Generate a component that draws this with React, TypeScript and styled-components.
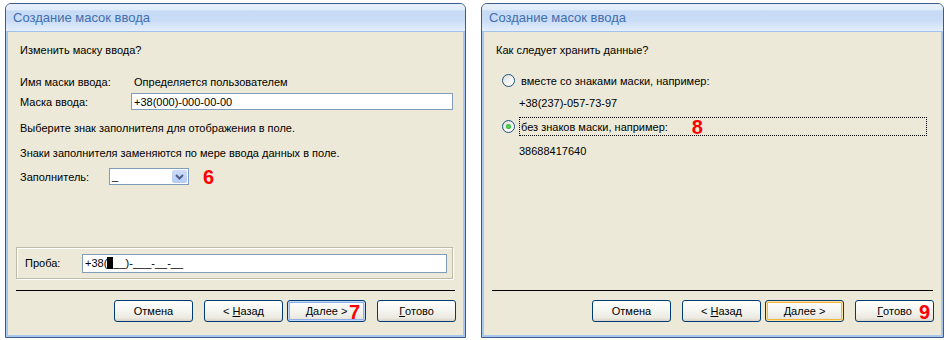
import styled, { createGlobalStyle, css } from "styled-components";

const GlobalStyle = createGlobalStyle`
  html, body {
    margin: 0;
    padding: 0;
    background: #fff;
  }
  body {
    font-family: "Liberation Sans", Arial, sans-serif;
    font-size: 11px;
    color: #000;
  }
`;

const Page = styled.div`
  display: flex;
  gap: 15px;
  padding: 3px 0 0 5px;
`;

const Window = styled.div<{ $width: number }>`
  width: ${(p) => p.$width}px;
  height: 335px;
  box-sizing: border-box;
  display: flex;
  flex-direction: column;
  border: 1px solid #3a5d8c;
  border-radius: 6px 6px 0 0;
  background: #ece9d8;
  box-shadow: inset 2px 0 #a9c6ee, inset -2px 0 #a9c6ee, inset 0 -2px #a9c6ee;
  overflow: hidden;
`;

const TitleBar = styled.div`
  height: 27px;
  flex: none;
  display: flex;
  align-items: center;
  padding-left: 7px;
  border-bottom: 1px solid #9fc2ef;
  background: linear-gradient(
    #e6effb 0%,
    #e2edfa 20%,
    #c7dbf6 26%,
    #c9dcf6 60%,
    #e3eefc 100%
  );
  color: #3f6fae;
  font-size: 13px;
`;

const Body = styled.div`
  flex: 1;
  display: flex;
  flex-direction: column;
  padding: 0 10px 15px;
`;

const Line = styled.div<{ $mt: number; $indent?: number }>`
  margin-top: ${(p) => p.$mt}px;
  padding-left: ${(p) => 4 + (p.$indent || 0)}px;
  height: 14px;
  line-height: 14px;
  white-space: nowrap;
`;

const FieldRow = styled.div<{ $mt: number }>`
  margin-top: ${(p) => p.$mt}px;
  padding-left: 4px;
  display: flex;
  align-items: center;
  height: 17px;
`;

const Label = styled.span<{ $w: number }>`
  width: ${(p) => p.$w}px;
  flex: none;
`;

const TextBox = styled.div<{ $w: number; $h?: number }>`
  width: ${(p) => p.$w}px;
  height: ${(p) => p.$h || 17}px;
  box-sizing: border-box;
  border: 1px solid #7f9db9;
  background: #fff;
  padding-left: 2px;
  display: flex;
  align-items: center;
  white-space: nowrap;
`;

const Cursor = styled.span`
  display: inline-block;
  width: 6px;
  height: 12px;
  background: #000;
`;

const Combo = styled.div`
  width: 80px;
  height: 17px;
  box-sizing: border-box;
  border: 1px solid #7f9db9;
  background: #fff;
  display: flex;
  align-items: stretch;
`;

const ComboValue = styled.span`
  flex: 1;
  padding-left: 2px;
  line-height: 15px;
`;

const ComboButton = styled.span`
  width: 15px;
  margin: 1px;
  border-radius: 2px;
  background: linear-gradient(#cddcfc, #b7cbf7);
  display: flex;
  align-items: center;
  justify-content: center;
`;

const Mark = styled.span<{ $ml?: number }>`
  margin-left: ${(p) => p.$ml || 0}px;
  font-family: "Liberation Sans", Arial, sans-serif;
  font-weight: bold;
  font-size: 20px;
  line-height: 14px;
  color: #ff0000;
`;

const OverMark = styled(Mark)`
  position: absolute;
  right: 5px;
  top: 4px;
`;

const GroupBox = styled.div`
  margin-top: auto;
  margin-right: 2px;
  height: 32px;
  box-sizing: border-box;
  border: 1px solid #bdbaa8;
  box-shadow: inset 1px 1px 0 #fff, 1px 1px 0 #fff;
  display: flex;
  align-items: center;
  padding: 0 5px 0 8px;
`;

const Separator = styled.div`
  margin-top: 11px;
  height: 0;
  border-top: 1px solid #000;
`;

const ButtonBar = styled.div`
  margin-top: 9px;
  margin-right: -1px;
  display: flex;
  justify-content: flex-end;
`;

const Button = styled.div<{ $ml?: number; $state?: "default" | "hot" }>`
  position: relative;
  margin-left: ${(p) => p.$ml || 0}px;
  width: 79px;
  height: 22px;
  box-sizing: border-box;
  border: 1px solid #003c74;
  border-radius: 3px;
  background: linear-gradient(#ffffff 0%, #f6f6f2 45%, #ebe9e0 85%, #d8d3c8 100%);
  display: flex;
  align-items: center;
  justify-content: center;
  ${(p) =>
    p.$state === "default" &&
    css`
      box-shadow: inset 0 0 0 1px #c3d7f8, inset 0 0 0 2px #8fb0e8;
    `}
  ${(p) =>
    p.$state === "hot" &&
    css`
      box-shadow: inset 0 0 0 1px #fde4a2, inset 0 0 0 2px #f4b53c;
    `}
`;

const RadioRow = styled.div<{ $mt: number; $h: number }>`
  margin-top: ${(p) => p.$mt}px;
  height: ${(p) => p.$h}px;
  padding-left: 10px;
  display: flex;
  align-items: center;
`;

const Radio = styled.span<{ $checked?: boolean }>`
  width: 13px;
  height: 13px;
  box-sizing: border-box;
  border-radius: 50%;
  border: 1px solid #1c5180;
  background: linear-gradient(135deg, #dcdcd5, #ffffff 80%);
  display: flex;
  align-items: center;
  justify-content: center;
  margin-right: 4px;
  &::after {
    content: "";
    display: ${(p) => (p.$checked ? "block" : "none")};
    width: 5px;
    height: 5px;
    border-radius: 50%;
    background: radial-gradient(#5fdc5f, #21a121);
  }
`;

const RadioLabel = styled.span<{ $focused?: boolean }>`
  display: flex;
  align-items: center;
  height: 19px;
  box-sizing: border-box;
  padding: 0 1px;
  border: 1px dotted ${(p) => (p.$focused ? "#000" : "transparent")};
  width: ${(p) => (p.$focused ? "408px" : "auto")};
`;

function Chevron() {
  return (
    <svg width="9" height="6" viewBox="0 0 9 6">
      <path d="M1 1l3.5 3.5L8 1" fill="none" stroke="#4d6185" strokeWidth="2" />
    </svg>
  );
}

function Buttons({ hot, doneMark, nextMark }: { hot?: boolean; doneMark?: string; nextMark?: string }) {
  return (
    <ButtonBar>
      <Button>Отмена</Button>
      <Button $ml={11}>
        &lt;&nbsp;<u>Н</u>азад
      </Button>
      <Button $ml={4} $state={hot ? "hot" : "default"}>
        <u>Д</u>алее &gt;
        {nextMark && <OverMark>{nextMark}</OverMark>}
      </Button>
      <Button $ml={11}>
        <u>Г</u>отово
        {doneMark && <OverMark style={{ right: 3 }}>{doneMark}</OverMark>}
      </Button>
    </ButtonBar>
  );
}

export default function App() {
  return (
    <>
      <GlobalStyle />
      <Page>
        <Window $width={461}>
          <TitleBar>Создание масок ввода</TitleBar>
          <Body>
            <Line $mt={11}>Изменить маску ввода?</Line>
            <FieldRow $mt={16}>
              <Label $w={111}>Имя маски ввода:</Label>
              <span>&nbsp;Определяется пользователем</span>
            </FieldRow>
            <FieldRow $mt={3}>
              <Label $w={111}>Маска ввода:</Label>
              <TextBox $w={322}>+38(000)-000-00-00</TextBox>
            </FieldRow>
            <Line $mt={11}>Выберите знак заполнителя для отображения в поле.</Line>
            <Line $mt={11}>Знаки заполнителя заменяются по мере ввода данных в поле.</Line>
            <FieldRow $mt={8}>
              <Label $w={89}>Заполнитель:</Label>
              <Combo>
                <ComboValue>_</ComboValue>
                <ComboButton>
                  <Chevron />
                </ComboButton>
              </Combo>
              <Mark $ml={14}>6</Mark>
            </FieldRow>
            <GroupBox>
              <Label $w={57}>Проба:</Label>
              <TextBox $w={366} $h={19}>
                +38(<Cursor />
                __)-___-__-__
              </TextBox>
            </GroupBox>
            <Separator />
            <Buttons nextMark="7" />
          </Body>
        </Window>
        <Window $width={463}>
          <TitleBar>Создание масок ввода</TitleBar>
          <Body>
            <Line $mt={11}>Как следует хранить данные?</Line>
            <RadioRow $mt={14} $h={19}>
              <Radio />
              <RadioLabel>вместе со знаками маски, например:</RadioLabel>
            </RadioRow>
            <Line $mt={6} $indent={23}>
              +38(237)-057-73-97
            </Line>
            <RadioRow $mt={7} $h={19}>
              <Radio $checked />
              <RadioLabel $focused>
                без знаков маски, например:
                <Mark $ml={24}>8</Mark>
              </RadioLabel>
            </RadioRow>
            <Line $mt={8} $indent={23}>
              38688417640
            </Line>
            <Separator style={{ marginTop: "auto" }} />
            <Buttons hot doneMark="9" />
          </Body>
        </Window>
      </Page>
    </>
  );
}
